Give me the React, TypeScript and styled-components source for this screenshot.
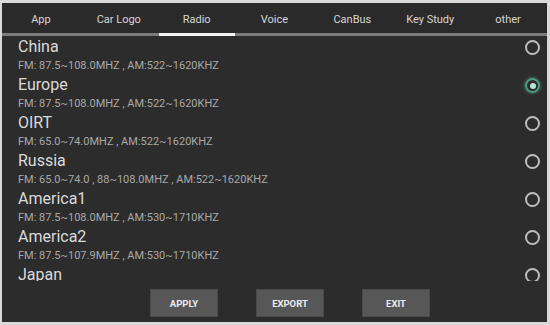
import React, { useState } from "react";
import styled, { createGlobalStyle } from "styled-components";

const Global = createGlobalStyle`
  html, body { margin: 0; padding: 0; background: #d9d9d9; }
  body { font-family: Roboto, "Liberation Sans", Arial, sans-serif; }
`;

const Screen = styled.div`
  margin: 3px 3px 0 2px;
  width: 545px;
  height: 319px;
  background: #2c2c2c;
  display: flex;
  flex-direction: column;
  overflow: hidden;
`;

const TabBar = styled.div`
  display: grid;
  grid-template-columns: repeat(7, 1fr);
  height: 30px;
  border-bottom: 3px solid #7c7c7c;
  background: #2a2a2a;
`;

const Tab = styled.div<{ $active?: boolean }>`
  position: relative;
  display: flex;
  align-items: center;
  justify-content: center;
  color: #d6d6d6;
  font-size: 11px;
  padding-top: 2px;
  &::after {
    content: "";
    display: ${(p) => (p.$active ? "block" : "none")};
    position: absolute;
    left: 1px;
    right: 1px;
    bottom: -3px;
    height: 3px;
    background: #f4f4f4;
  }
`;

const List = styled.div`
  flex: 0 0 245px;
  overflow: hidden;
`;

const Row = styled.div`
  display: flex;
  align-items: flex-start;
  height: 38px;
  padding: 2px 7px 0 16px;
  box-sizing: border-box;
`;

const Texts = styled.div`
  flex: 1;
  display: flex;
  flex-direction: column;
  gap: 4px;
`;

const Title = styled.div`
  color: #dadada;
  font-size: 16px;
  line-height: 18px;
`;

const Sub = styled.div`
  color: #a9a9a9;
  font-size: 11px;
  line-height: 12px;
`;

const Radio = styled.div<{ $on?: boolean }>`
  width: 15px;
  height: 15px;
  margin-top: 2px;
  border-radius: 50%;
  box-sizing: border-box;
  border: 2px solid ${(p) => (p.$on ? "#4f9e84" : "#bdbdbd")};
  display: flex;
  align-items: center;
  justify-content: center;
  box-shadow: ${(p) => (p.$on ? "0 0 3px 1px rgba(80,160,130,0.45)" : "none")};
  &::after {
    content: "";
    display: ${(p) => (p.$on ? "block" : "none")};
    width: 6px;
    height: 6px;
    border-radius: 50%;
    background: #b4e6d2;
  }
`;

const ButtonBar = styled.div`
  flex: 1;
  display: flex;
  justify-content: center;
  gap: 38px;
  padding: 8px 0 0 31px;
`;

const Button = styled.button`
  width: 68px;
  height: 28px;
  background: #575757;
  border: 1px solid #4a4a4a;
  color: #ececec;
  font-family: Roboto, "Liberation Sans", Arial, sans-serif;
  font-weight: bold;
  font-size: 9.5px;
  padding: 0;
`;

const tabs = ["App", "Car Logo", "Radio", "Voice", "CanBus", "Key Study", "other"];

const regions: [string, string?][] = [
  ["China", "FM: 87.5~108.0MHZ , AM:522~1620KHZ"],
  ["Europe", "FM: 87.5~108.0MHZ , AM:522~1620KHZ"],
  ["OIRT", "FM: 65.0~74.0MHZ , AM:522~1620KHZ"],
  ["Russia", "FM: 65.0~74.0 , 88~108.0MHZ , AM:522~1620KHZ"],
  ["America1", "FM: 87.5~108.0MHZ , AM:530~1710KHZ"],
  ["America2", "FM: 87.5~107.9MHZ , AM:530~1710KHZ"],
  ["Japan"],
];

export default function App() {
  const [sel, setSel] = useState(1);
  return (
    <>
      <Global />
      <Screen>
        <TabBar>
          {tabs.map((t) => (
            <Tab key={t} $active={t === "Radio"}>
              {t}
            </Tab>
          ))}
        </TabBar>
        <List>
          {regions.map(([name, sub], i) => (
            <Row key={name} onClick={() => setSel(i)}>
              <Texts>
                <Title>{name}</Title>
                {sub && <Sub>{sub}</Sub>}
              </Texts>
              <Radio $on={sel === i} />
            </Row>
          ))}
        </List>
        <ButtonBar>
          <Button>APPLY</Button>
          <Button>EXPORT</Button>
          <Button>EXIT</Button>
        </ButtonBar>
      </Screen>
    </>
  );
}
